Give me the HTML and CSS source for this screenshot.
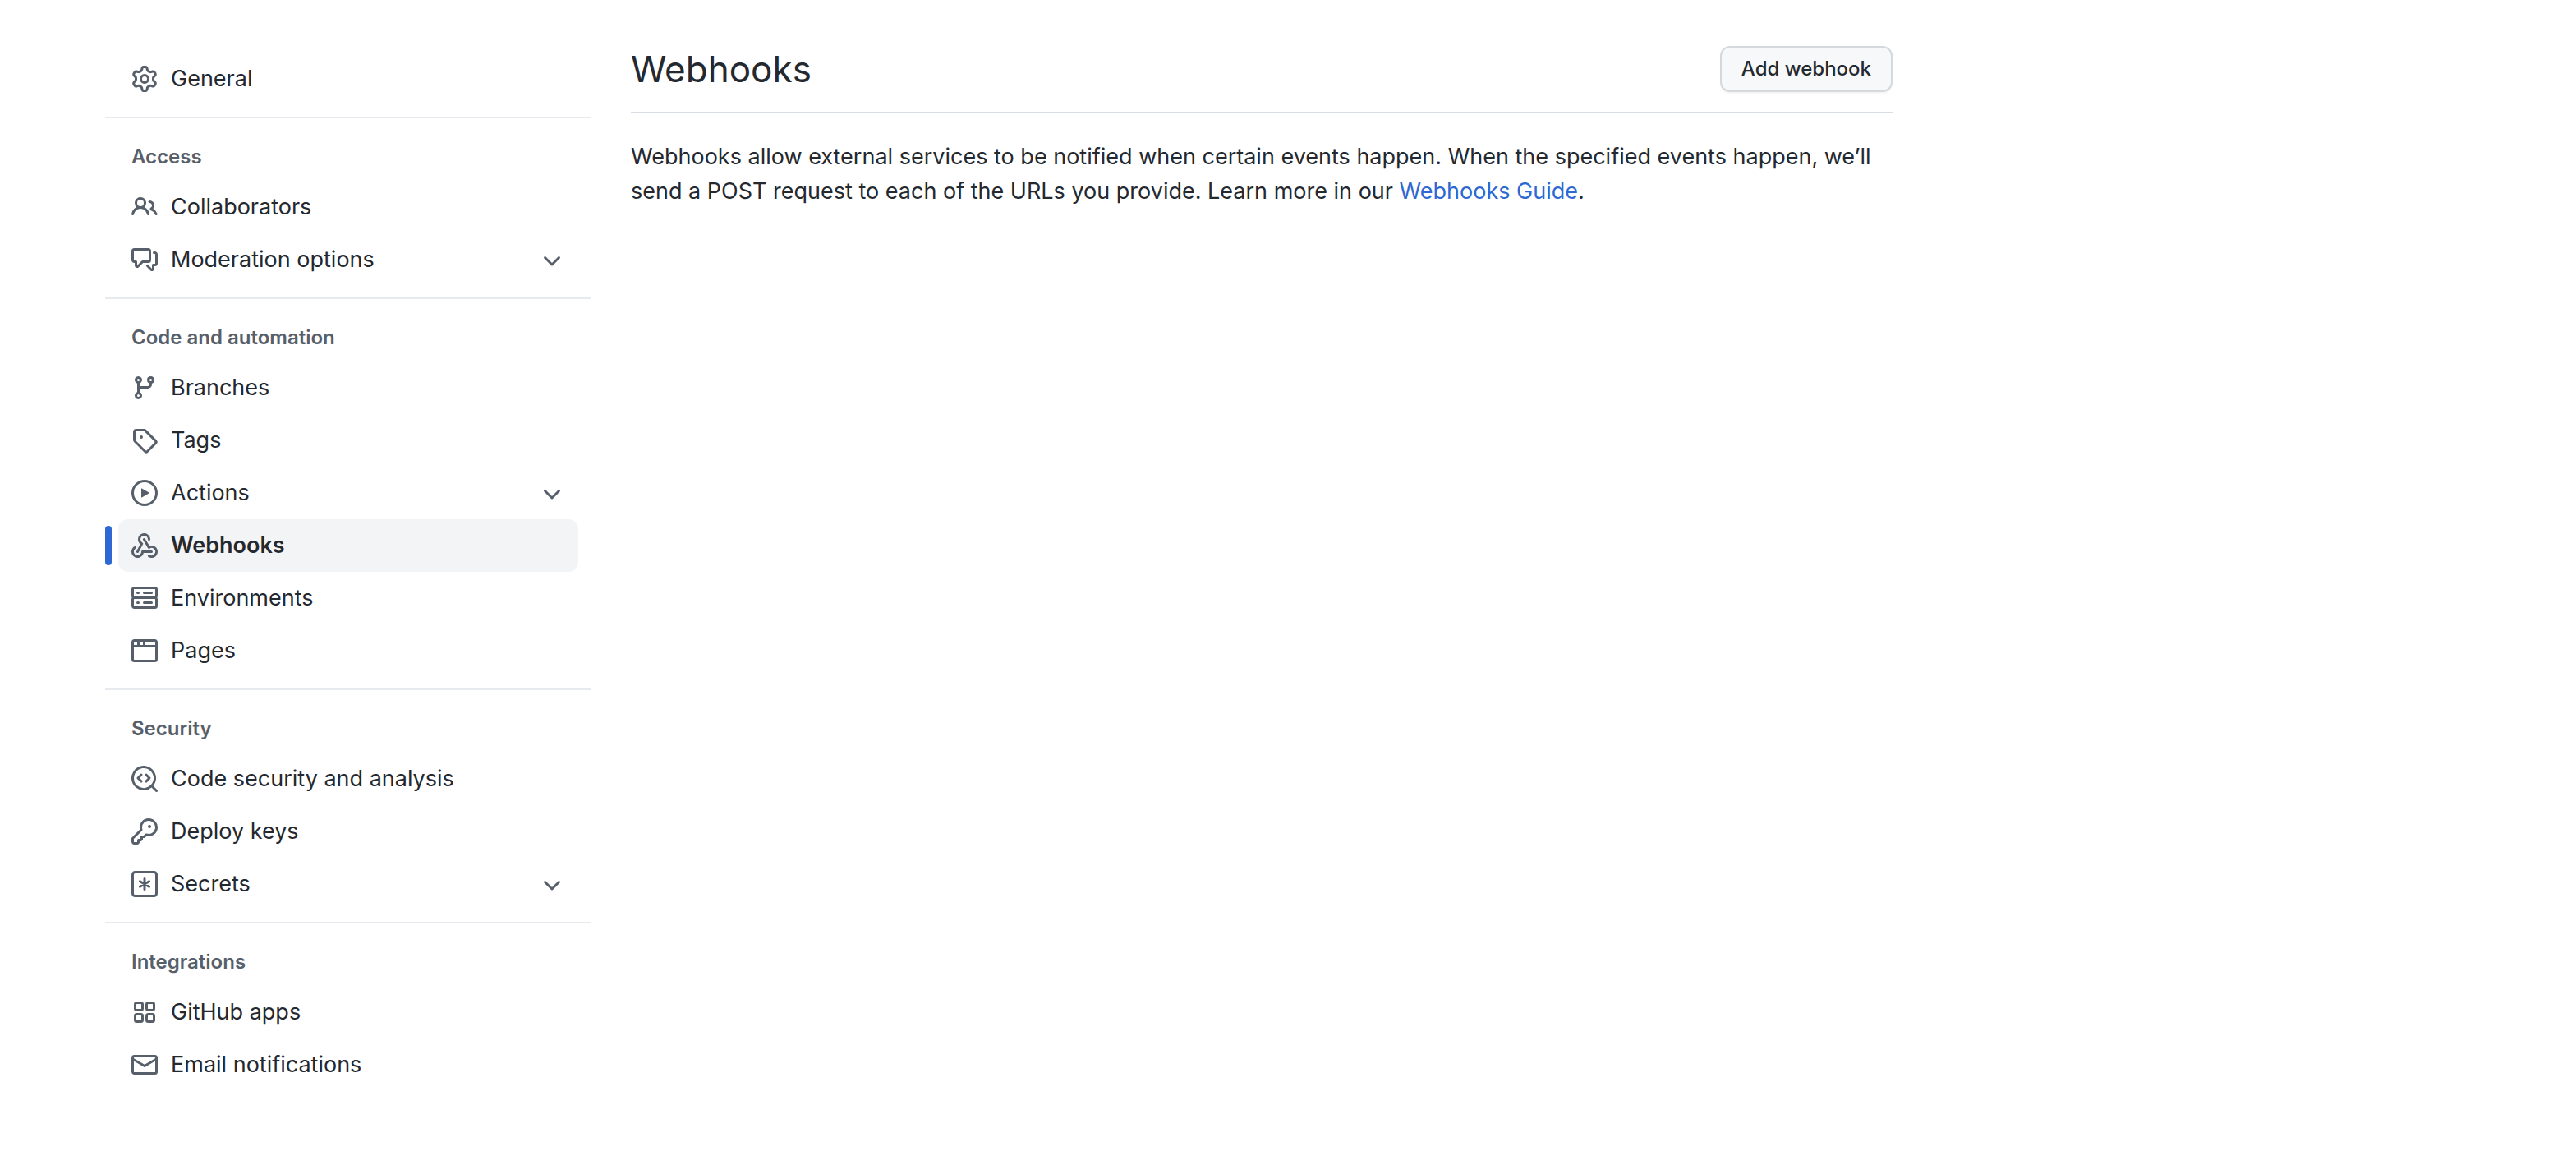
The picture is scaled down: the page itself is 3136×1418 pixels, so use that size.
FILE: index.html
```html
<!DOCTYPE html>
<html lang="en">
<head>
<meta charset="utf-8">
<meta name="viewport" content="width=device-width, initial-scale=1">
<title>Webhooks</title>
<link rel="stylesheet" href="styles.css">
</head>
<body>
<div class="layout">
  <nav class="sidebar" aria-label="Repository settings">
    <ul class="nav-list">
      <li><a class="nav-item" href="#general"><svg class="icon" viewBox="0 0 16 16" aria-hidden="true"><path fill-rule="evenodd" d="M8 0a8.2 8.2 0 0 1 .701.031C9.444.095 9.99.645 10.16 1.29l.288 1.107c.018.066.079.158.212.224.231.114.454.243.668.386.123.082.233.09.299.071l1.103-.303c.644-.176 1.392.021 1.82.63.27.385.506.792.704 1.218.315.675.111 1.422-.364 1.891l-.814.806c-.049.048-.098.147-.088.294.016.257.016.515 0 .772-.01.147.038.246.088.294l.814.806c.475.469.679 1.216.364 1.891a7.977 7.977 0 0 1-.704 1.217c-.428.61-1.176.807-1.82.63l-1.102-.302c-.067-.019-.177-.011-.3.071a5.909 5.909 0 0 1-.668.386c-.133.066-.194.158-.211.224l-.29 1.106c-.168.646-.715 1.196-1.458 1.26a8.006 8.006 0 0 1-1.402 0c-.743-.064-1.289-.614-1.458-1.26l-.289-1.106c-.018-.066-.079-.158-.212-.224a5.738 5.738 0 0 1-.668-.386c-.123-.082-.233-.09-.299-.071l-1.103.303c-.644.176-1.392-.021-1.82-.63a8.12 8.12 0 0 1-.704-1.218c-.315-.675-.111-1.422.363-1.891l.815-.806c.05-.048.098-.147.088-.294a6.214 6.214 0 0 1 0-.772c.01-.147-.038-.246-.088-.294l-.815-.806C.635 6.045.431 5.298.746 4.623a7.92 7.92 0 0 1 .704-1.217c.428-.61 1.176-.807 1.82-.63l1.102.302c.067.019.177.011.3-.071.214-.143.437-.272.668-.386.133-.066.194-.158.211-.224l.29-1.106C6.009.645 6.556.095 7.299.03 7.53.01 7.764 0 8 0Zm-.571 1.525c-.036.003-.108.036-.137.146l-.289 1.105c-.147.561-.549.967-.998 1.189-.173.086-.34.183-.5.29-.417.278-.97.423-1.529.27l-1.103-.303c-.109-.03-.175.016-.195.045-.22.312-.412.644-.573.99-.014.031-.021.11.059.19l.815.806c.411.406.562.957.53 1.456a4.709 4.709 0 0 0 0 .582c.032.499-.119 1.05-.53 1.456l-.815.806c-.081.08-.073.159-.059.19.162.346.353.677.573.989.02.03.085.076.195.046l1.102-.303c.56-.153 1.113-.008 1.53.27.161.107.328.204.501.29.447.222.85.629.997 1.189l.289 1.105c.029.109.101.143.137.146a6.6 6.6 0 0 0 1.142 0c.036-.003.108-.036.137-.146l.289-1.105c.147-.561.549-.967.998-1.189.173-.086.34-.183.5-.29.417-.278.97-.423 1.529-.27l1.103.303c.109.029.175-.016.195-.045.22-.313.411-.644.573-.99.014-.031.021-.11-.059-.19l-.815-.806c-.411-.406-.562-.957-.53-1.456a4.709 4.709 0 0 0 0-.582c-.032-.499.119-1.05.53-1.456l.815-.806c.081-.08.073-.159.059-.19a6.464 6.464 0 0 0-.573-.989c-.02-.03-.085-.076-.195-.046l-1.102.303c-.56.153-1.113.008-1.53-.27a4.44 4.44 0 0 0-.501-.29c-.447-.222-.85-.629-.997-1.189l-.289-1.105c-.029-.11-.101-.143-.137-.146a6.6 6.6 0 0 0-1.142 0ZM11 8a3 3 0 1 1-6 0 3 3 0 0 1 6 0ZM9.5 8a1.5 1.5 0 1 0-3.001.001A1.5 1.5 0 0 0 9.5 8Z"/></svg><span class="label">General</span></a></li>
    </ul>

    <section class="nav-group">
      <h2 class="nav-heading">Access</h2>
      <ul class="nav-list">
        <li><a class="nav-item" href="#collaborators"><svg class="icon" viewBox="0 0 16 16" aria-hidden="true"><path fill-rule="evenodd" d="M5.5 3.5a2 2 0 100 4 2 2 0 000-4zM2 5.5a3.5 3.5 0 115.898 2.549 5.507 5.507 0 013.034 4.084.75.75 0 11-1.482.235 4.001 4.001 0 00-7.9 0 .75.75 0 01-1.482-.236A5.507 5.507 0 013.102 8.05 3.49 3.49 0 012 5.5zM11 4a.75.75 0 100 1.5 1.5 1.5 0 01.666 2.844.75.75 0 00-.416.672v.352a.75.75 0 00.574.73c1.2.289 2.162 1.2 2.522 2.372a.75.75 0 101.434-.44 5.01 5.01 0 00-2.56-3.012A3 3 0 0011 4z"/></svg><span class="label">Collaborators</span></a></li>
        <li><button class="nav-item" type="button" aria-expanded="false"><svg class="icon" viewBox="0 0 16 16" aria-hidden="true"><path fill-rule="evenodd" d="M1.5 2.75a.25.25 0 01.25-.25h8.5a.25.25 0 01.25.25v5.5a.25.25 0 01-.25.25h-3.5a.75.75 0 00-.53.22L3.5 11.44V9.25a.75.75 0 00-.75-.75h-1a.25.25 0 01-.25-.25v-5.5zM1.75 1A1.75 1.75 0 000 2.75v5.5C0 9.216.784 10 1.75 10H2v1.543a1.457 1.457 0 002.487 1.03L7.061 10h3.189A1.75 1.75 0 0012 8.25v-5.5A1.75 1.75 0 0010.25 1h-8.5zM14.5 4.75a.25.25 0 00-.25-.25h-.5a.75.75 0 110-1.5h.5c.966 0 1.75.784 1.75 1.75v5.5A1.75 1.75 0 0114.25 12H14v1.543a1.457 1.457 0 01-2.487 1.03L9.22 12.28a.75.75 0 111.06-1.06l2.22 2.22v-2.19a.75.75 0 01.75-.75h1a.25.25 0 00.25-.25v-5.5z"/></svg><span class="label">Moderation options</span><svg class="icon" viewBox="0 0 16 16" aria-hidden="true"><path d="M12.78 6.22a.75.75 0 010 1.06l-4.25 4.25a.75.75 0 01-1.06 0L3.22 7.28a.75.75 0 011.06-1.06L8 9.94l3.72-3.72a.75.75 0 011.06 0z"/></svg></button></li>
      </ul>
    </section>

    <section class="nav-group">
      <h2 class="nav-heading">Code and automation</h2>
      <ul class="nav-list">
        <li><a class="nav-item" href="#branches"><svg class="icon" viewBox="0 0 16 16" aria-hidden="true"><path fill-rule="evenodd" d="M11.75 2.5a.75.75 0 100 1.5.75.75 0 000-1.5zm-2.25.75a2.25 2.25 0 113 2.122V6A2.5 2.5 0 0110 8.5H6a1 1 0 00-1 1v1.128a2.251 2.251 0 11-1.5 0V5.372a2.25 2.25 0 111.5 0v1.836A2.492 2.492 0 016 7h4a1 1 0 001-1v-.628A2.25 2.25 0 019.5 3.25zM4.25 12a.75.75 0 100 1.5.75.75 0 000-1.5zM3.5 3.25a.75.75 0 111.5 0 .75.75 0 01-1.5 0z"/></svg><span class="label">Branches</span></a></li>
        <li><a class="nav-item" href="#tags"><svg class="icon" viewBox="0 0 16 16" aria-hidden="true"><path fill-rule="evenodd" d="M2.5 7.775V2.75a.25.25 0 01.25-.25h5.025a.25.25 0 01.177.073l6.25 6.25a.25.25 0 010 .354l-5.025 5.025a.25.25 0 01-.354 0l-6.25-6.25a.25.25 0 01-.073-.177zm-1.5 0V2.75C1 1.784 1.784 1 2.75 1h5.025c.464 0 .91.184 1.238.513l6.25 6.25a1.75 1.75 0 010 2.474l-5.026 5.026a1.75 1.75 0 01-2.474 0l-6.25-6.25A1.75 1.75 0 011 7.775zM6 5a1 1 0 100 2 1 1 0 000-2z"/></svg><span class="label">Tags</span></a></li>
        <li><button class="nav-item" type="button" aria-expanded="false"><svg class="icon" viewBox="0 0 16 16" aria-hidden="true"><path fill-rule="evenodd" d="M1.5 8a6.5 6.5 0 1113 0 6.5 6.5 0 01-13 0zM8 0a8 8 0 100 16A8 8 0 008 0zM6.379 5.227A.25.25 0 006 5.442v5.117a.25.25 0 00.379.214l4.264-2.559a.25.25 0 000-.428L6.379 5.227z"/></svg><span class="label">Actions</span><svg class="icon" viewBox="0 0 16 16" aria-hidden="true"><path d="M12.78 6.22a.75.75 0 010 1.06l-4.25 4.25a.75.75 0 01-1.06 0L3.22 7.28a.75.75 0 011.06-1.06L8 9.94l3.72-3.72a.75.75 0 011.06 0z"/></svg></button></li>
        <li><a class="nav-item current" href="#webhooks" aria-current="page"><svg class="icon" viewBox="0 0 16 16" aria-hidden="true"><path d="M5.5 4.25a2.25 2.25 0 014.5 0 .75.75 0 001.5 0 3.75 3.75 0 10-6.14 2.889l-2.272 4.258a.75.75 0 001.324.706L7 7.25a.75.75 0 00-.309-1.015A2.25 2.25 0 015.5 4.25z"/><path d="M7.364 3.607a.75.75 0 011.03.257l2.608 4.349a3.75 3.75 0 11-.628 6.785.75.75 0 01.752-1.299 2.25 2.25 0 10-.033-3.88.75.75 0 01-1.03-.256L7.107 4.636a.75.75 0 01.257-1.03z"/><path d="M2.9 8.776A.75.75 0 012.625 9.8 2.25 2.25 0 106 11.75a.75.75 0 01.75-.751h5.5a.75.75 0 010 1.5H7.425a3.751 3.751 0 11-5.55-3.998.75.75 0 011.024.274z"/></svg><span class="label">Webhooks</span></a></li>
        <li><a class="nav-item" href="#environments"><svg class="icon" viewBox="0 0 16 16" aria-hidden="true"><path fill-rule="evenodd" d="M1.75 1A1.75 1.75 0 000 2.75v4c0 .372.116.717.314 1a1.742 1.742 0 00-.314 1v4c0 .966.784 1.75 1.75 1.75h12.5A1.75 1.75 0 0016 12.75v-4c0-.372-.116-.717-.314-1 .198-.283.314-.628.314-1v-4A1.75 1.75 0 0014.25 1H1.75zm0 7.5a.25.25 0 00-.25.25v4c0 .138.112.25.25.25h12.5a.25.25 0 00.25-.25v-4a.25.25 0 00-.25-.25H1.75zM1.5 2.75a.25.25 0 01.25-.25h12.5a.25.25 0 01.25.25v4a.25.25 0 01-.25.25H1.75a.25.25 0 01-.25-.25v-4zm5.5 2A.75.75 0 017.75 4h4.5a.75.75 0 010 1.5h-4.5A.75.75 0 017 4.75zM7.75 10a.75.75 0 000 1.5h4.5a.75.75 0 000-1.5h-4.5zM3 4.75A.75.75 0 013.75 4h.5a.75.75 0 010 1.5h-.5A.75.75 0 013 4.75zM3.75 10a.75.75 0 000 1.5h.5a.75.75 0 000-1.5h-.5z"/></svg><span class="label">Environments</span></a></li>
        <li><a class="nav-item" href="#pages"><svg class="icon" viewBox="0 0 16 16" aria-hidden="true"><path fill-rule="evenodd" d="M0 2.75C0 1.784.784 1 1.75 1h12.5c.966 0 1.75.784 1.75 1.75v10.5A1.75 1.75 0 0114.25 15H1.75A1.75 1.75 0 010 13.25V2.75zm1.75-.25a.25.25 0 00-.25.25V4.5h2v-2H1.75zM5 2.5v2h2v-2H5zm3.5 0v2h6V2.75a.25.25 0 00-.25-.25H8.5zm6 3.5h-13v7.25c0 .138.112.25.25.25h12.5a.25.25 0 00.25-.25V6z"/></svg><span class="label">Pages</span></a></li>
      </ul>
    </section>

    <section class="nav-group">
      <h2 class="nav-heading">Security</h2>
      <ul class="nav-list">
        <li><a class="nav-item" href="#security"><svg class="icon" viewBox="0 0 16 16" aria-hidden="true"><path d="M8.47 4.97a.75.75 0 000 1.06L9.94 7.5 8.47 8.97a.75.75 0 101.06 1.06l2-2a.75.75 0 000-1.06l-2-2a.75.75 0 00-1.06 0zM6.53 6.03a.75.75 0 00-1.06-1.06l-2 2a.75.75 0 000 1.06l2 2a.75.75 0 101.06-1.06L5.06 7.5l1.47-1.47z"/><path fill-rule="evenodd" d="M12.246 13.307a7.5 7.5 0 111.06-1.06l2.474 2.473a.75.75 0 11-1.06 1.06l-2.474-2.473zM1.5 7.5a6 6 0 1110.386 4.094.75.75 0 00-.292.293A6 6 0 011.5 7.5z"/></svg><span class="label">Code security and analysis</span></a></li>
        <li><a class="nav-item" href="#keys"><svg class="icon" viewBox="0 0 16 16" aria-hidden="true"><path fill-rule="evenodd" d="M6.5 5.5a4 4 0 112.731 3.795.75.75 0 00-.768.18L7.44 10.5H6.25a.75.75 0 00-.75.75v1.19l-.06.06H4.25a.75.75 0 00-.75.75v1.19l-.06.06H1.75a.25.25 0 01-.25-.25v-1.69l5.024-5.023a.75.75 0 00.181-.768A3.995 3.995 0 016.5 5.5zm4-5.5a5.5 5.5 0 00-5.348 6.788L.22 11.72a.75.75 0 00-.22.53v2C0 15.216.784 16 1.75 16h2a.75.75 0 00.53-.22l.5-.5a.75.75 0 00.22-.53V14h.75a.75.75 0 00.53-.22l.5-.5a.75.75 0 00.22-.53V12h.75a.75.75 0 00.53-.22l.932-.932A5.5 5.5 0 1010.5 0zm.5 6a1 1 0 100-2 1 1 0 000 2z"/></svg><span class="label">Deploy keys</span></a></li>
        <li><button class="nav-item" type="button" aria-expanded="false"><svg class="icon icon-line" viewBox="0 0 16 16" aria-hidden="true"><rect x=".75" y=".75" width="14.5" height="14.5" rx="1.5"/><path d="M8 4.75v6.5M5.2 6.4l5.6 3.2M5.2 9.6l5.6-3.2"/></svg><span class="label">Secrets</span><svg class="icon" viewBox="0 0 16 16" aria-hidden="true"><path d="M12.78 6.22a.75.75 0 010 1.06l-4.25 4.25a.75.75 0 01-1.06 0L3.22 7.28a.75.75 0 011.06-1.06L8 9.94l3.72-3.72a.75.75 0 011.06 0z"/></svg></button></li>
      </ul>
    </section>

    <section class="nav-group">
      <h2 class="nav-heading">Integrations</h2>
      <ul class="nav-list">
        <li><a class="nav-item" href="#apps"><svg class="icon icon-line" viewBox="0 0 16 16" aria-hidden="true"><rect x="2.25" y="2.25" width="4.5" height="4.5" rx="1"/><rect x="9.25" y="2.25" width="4.5" height="4.5" rx="1"/><rect x="2.25" y="9.25" width="4.5" height="4.5" rx="1"/><rect x="9.25" y="9.25" width="4.5" height="4.5" rx="1"/></svg><span class="label">GitHub apps</span></a></li>
        <li><a class="nav-item" href="#email"><svg class="icon" viewBox="0 0 16 16" aria-hidden="true"><path fill-rule="evenodd" d="M1.75 2A1.75 1.75 0 000 3.75v8.5C0 13.216.784 14 1.75 14h12.5A1.75 1.75 0 0016 12.25v-8.5A1.75 1.75 0 0014.25 2H1.75zM14.5 4.07v-.32a.25.25 0 00-.25-.25H1.75a.25.25 0 00-.25.25v.32L8 7.88l6.5-3.81zm-13 1.74v6.441c0 .138.112.25.25.25h12.5a.25.25 0 00.25-.25V5.809L8.38 9.397a.75.75 0 01-.76 0L1.5 5.809z"/></svg><span class="label">Email notifications</span></a></li>
      </ul>
    </section>
  </nav>

  <main class="content">
    <header class="page-header">
      <h1 class="page-title">Webhooks</h1>
      <button class="button" type="button">Add webhook</button>
    </header>
    <p class="intro">Webhooks allow external services to be notified when certain events happen. When the specified events happen, we’ll send a POST request to each of the URLs you provide. Learn more in our <a class="link" href="#guide">Webhooks Guide</a>.</p>
  </main>
</div>
</body>
</html>
```
FILE: styles.css
```css
* {
  box-sizing: border-box;
}

body {
  margin: 0;
  background: #fff;
  color: #24292f;
  font: 400 27px/42px Inter, "Liberation Sans", sans-serif;
}

.layout {
  display: grid;
  grid-template-columns: 592px minmax(0, 1fr);
  gap: 48px;
  max-width: 2432px;
  padding: 56px 128px;
}

.sidebar {
  padding-top: 8px;
}

.nav-list {
  margin: 0;
  padding: 0 16px;
  list-style: none;
}

.nav-group {
  margin-top: 14px;
  border-top: 2px solid #e7eaee;
}

.nav-heading {
  margin: 0;
  padding: 29px 32px 11px;
  color: #57606a;
  font-size: 24px;
  font-weight: 600;
  line-height: 36px;
}

.nav-item {
  position: relative;
  display: flex;
  align-items: center;
  gap: 16px;
  width: 100%;
  min-height: 64px;
  padding: 0 16px;
  border: 0;
  border-radius: 12px;
  background: none;
  color: inherit;
  font: inherit;
  text-align: left;
  text-decoration: none;
}

.nav-item.current {
  background: #f3f4f6;
  font-weight: 600;
}

.nav-item.current::before {
  content: "";
  position: absolute;
  top: 8px;
  bottom: 8px;
  left: -16px;
  width: 8px;
  border-radius: 4px;
  background: #2d68d3;
}

.label {
  flex: 1;
}

.icon {
  flex: none;
  width: 32px;
  height: 32px;
  fill: #57606a;
}

.icon-line {
  fill: none;
  stroke: #57606a;
  stroke-width: 1.5;
  stroke-linecap: round;
}

.page-header {
  display: flex;
  align-items: center;
  justify-content: space-between;
  padding-bottom: 24px;
  border-bottom: 2px solid #d8dee4;
}

.page-title {
  margin: 0;
  font-size: 44px;
  font-weight: 400;
  line-height: 56px;
}

.button {
  padding: 8px 24px;
  border: 2px solid #d5d9dd;
  border-radius: 12px;
  background: #f6f8fa;
  box-shadow: 0 2px 0 rgba(27, 31, 36, 0.04);
  color: #24292f;
  font: 500 24px/36px Inter, "Liberation Sans", sans-serif;
}

.intro {
  margin: 32px 0 0;
}

.link {
  color: #2d68d3;
  text-decoration: none;
}
```
